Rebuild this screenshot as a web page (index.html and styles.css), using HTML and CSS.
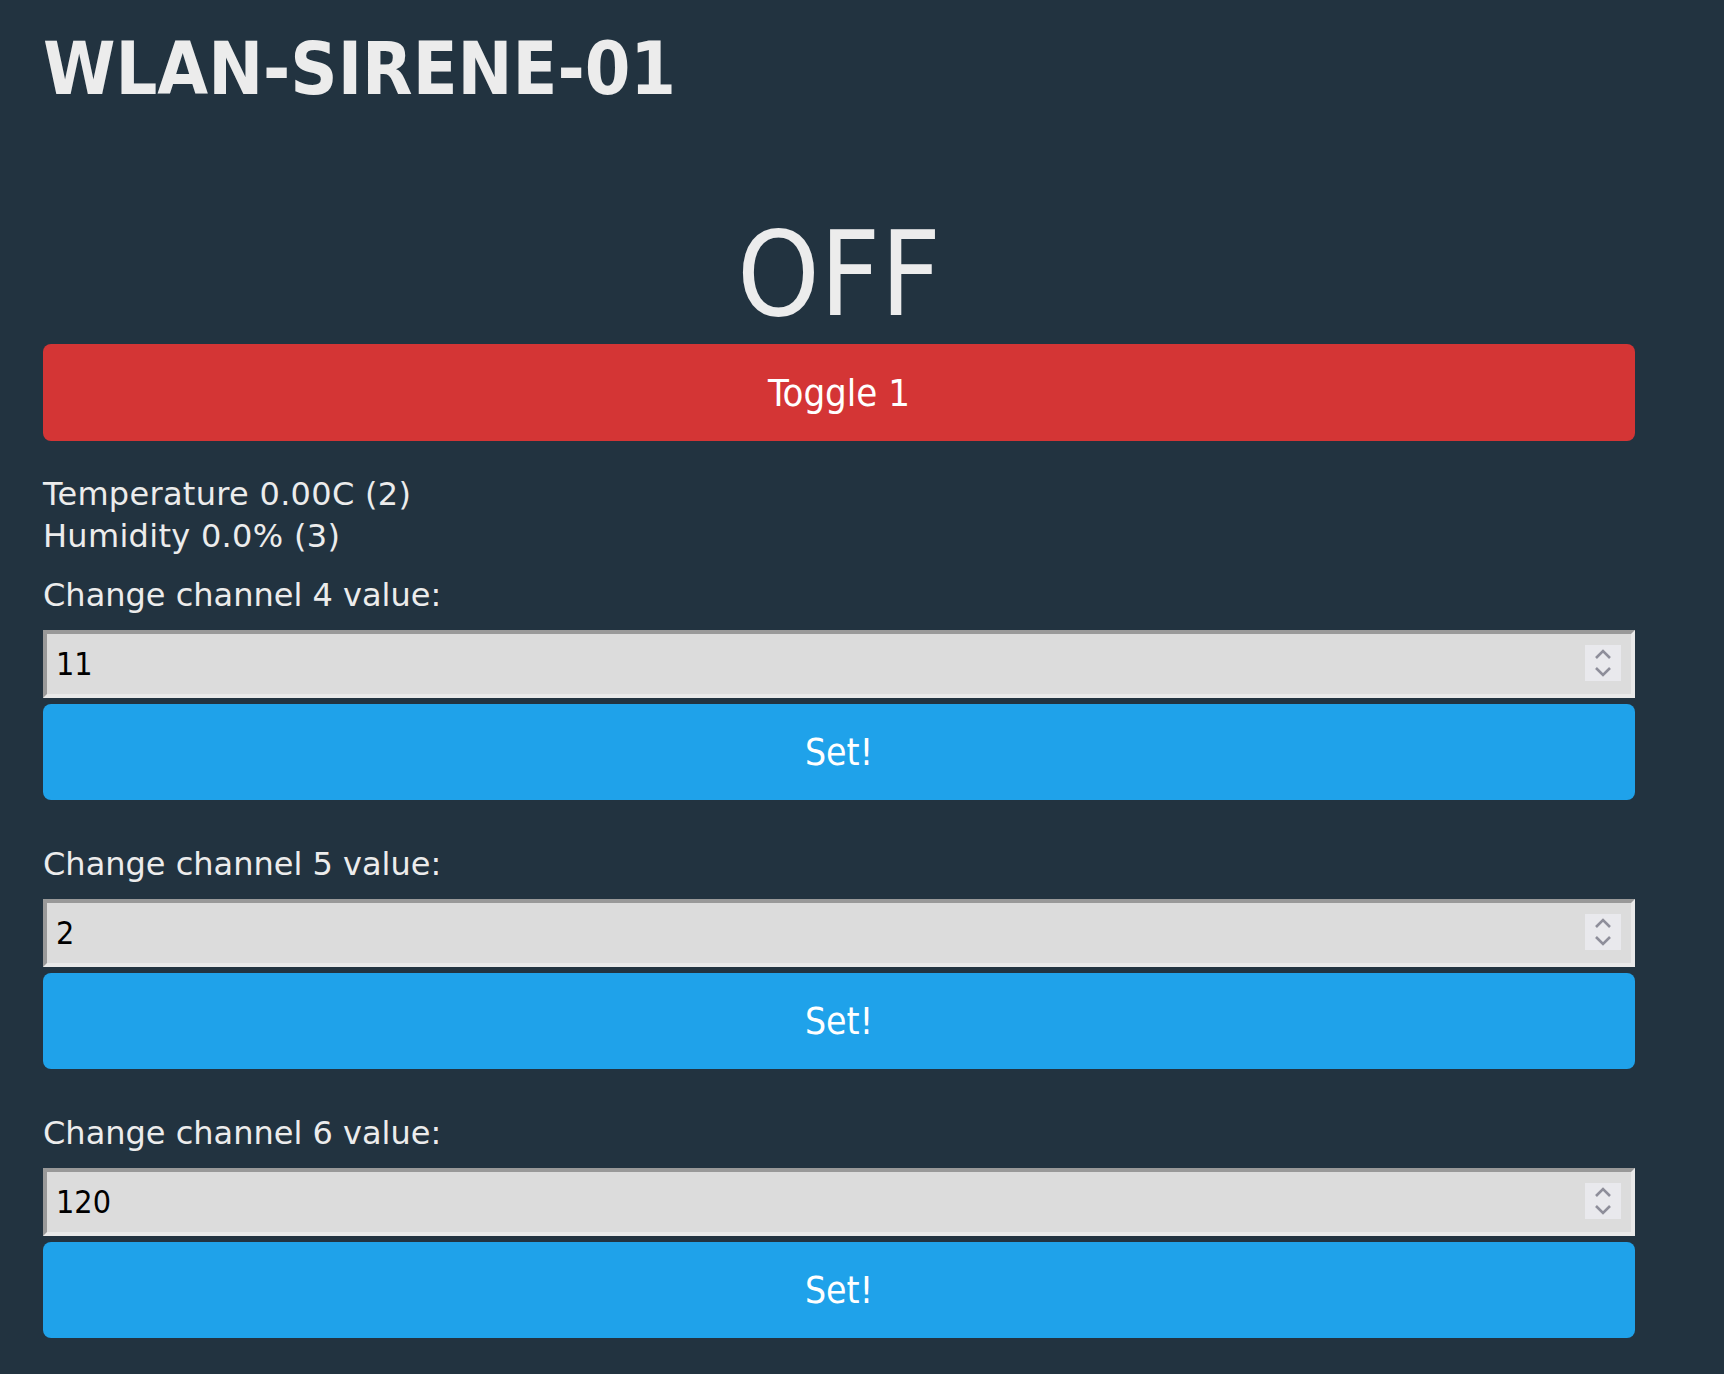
FILE: index.html
```html
<!DOCTYPE html>
<html lang="de">
<head>
<meta charset="utf-8">
<title>WLAN-SIRENE-01</title>
<link rel="stylesheet" href="styles.css">
</head>
<body>
<div class="page">
  <h1 class="title">WLAN-SIRENE-01</h1>
  <div class="status">OFF</div>
  <button class="btn btn-red" type="button">Toggle 1</button>
  <div class="sensors">
    <div class="line">Temperature 0.00C (2)</div>
    <div class="line">Humidity 0.0% (3)</div>
  </div>

  <form class="channel">
    <label class="label">Change channel 4 value:</label>
    <div class="field">
      <input class="num" type="number" value="11">
      <span class="spin"><svg width="18" height="28" viewBox="0 0 18 28"><path d="M2 9 L9 2 L16 9 M2 19 L9 26 L16 19" fill="none" stroke="#8e8e9a" stroke-width="2.6"/></svg></span>
    </div>
    <button class="btn btn-blue" type="button">Set!</button>
  </form>

  <form class="channel">
    <label class="label">Change channel 5 value:</label>
    <div class="field">
      <input class="num" type="number" value="2">
      <span class="spin"><svg width="18" height="28" viewBox="0 0 18 28"><path d="M2 9 L9 2 L16 9 M2 19 L9 26 L16 19" fill="none" stroke="#8e8e9a" stroke-width="2.6"/></svg></span>
    </div>
    <button class="btn btn-blue" type="button">Set!</button>
  </form>

  <form class="channel">
    <label class="label">Change channel 6 value:</label>
    <div class="field">
      <input class="num" type="number" value="120">
      <span class="spin"><svg width="18" height="28" viewBox="0 0 18 28"><path d="M2 9 L9 2 L16 9 M2 19 L9 26 L16 19" fill="none" stroke="#8e8e9a" stroke-width="2.6"/></svg></span>
    </div>
    <button class="btn btn-blue" type="button">Set!</button>
  </form>
</div>
</body>
</html>
```

FILE: styles.css
```css
html, body {
  margin: 0;
  padding: 0;
  background: #223340;
}

body {
  font-family: "DejaVu Sans", Verdana, sans-serif;
  color: #ececec;
}

.page {
  width: 1592px;
  padding: 30px 0 0 43px;
}

.title {
  margin: 0;
  font-size: 73px;
  font-weight: bold;
  font-stretch: condensed;
  line-height: 78px;
  height: 80px;
  color: #ececec;
}

.status {
  margin-top: 103px;
  font-size: 117px;
  font-stretch: condensed;
  line-height: 124px;
  height: 128px;
  text-align: center;
}

.btn {
  display: block;
  width: 100%;
  border: 0;
  border-radius: 8px;
  color: #ffffff;
  font-family: "DejaVu Sans", Verdana, sans-serif;
  font-stretch: condensed;
  text-align: center;
  padding: 0;
  cursor: pointer;
}

.btn-red {
  margin-top: 3px;
  height: 97px;
  background: #d43535;
  font-size: 38px;
}

.btn-blue {
  margin-top: 6px;
  height: 96px;
  background: #1fa2ea;
  font-size: 37px;
}

.sensors {
  margin-top: 32px;
  font-size: 32px;
  line-height: 42px;
  letter-spacing: 0.3px;
}

.channel {
  display: flex;
  flex-direction: column;
  margin: 17px 0 0;
}

.channel + .channel {
  margin-top: 43px;
}

.label {
  font-size: 32px;
  line-height: 42px;
  height: 42px;
}

.field {
  position: relative;
  margin-top: 14px;
  height: 68px;
}

.num {
  box-sizing: border-box;
  width: 100%;
  height: 68px;
  margin: 0;
  padding: 0 0 0 9px;
  border-width: 4px;
  border-style: solid;
  border-color: #999999 #e9e9e9 #e9e9e9 #999999;
  background: #dcdcdc;
  color: #000000;
  font-family: "DejaVu Sans", Verdana, sans-serif;
  font-stretch: condensed;
  font-size: 32px;
  outline: none;
  -moz-appearance: textfield;
  appearance: textfield;
}

.num::-webkit-inner-spin-button,
.num::-webkit-outer-spin-button {
  -webkit-appearance: none;
  margin: 0;
}

.spin {
  position: absolute;
  top: 15px;
  right: 14px;
  width: 36px;
  height: 36px;
  background: #e9e9ed;
  display: flex;
  align-items: center;
  justify-content: center;
}

.spin svg {
  display: block;
}
```
